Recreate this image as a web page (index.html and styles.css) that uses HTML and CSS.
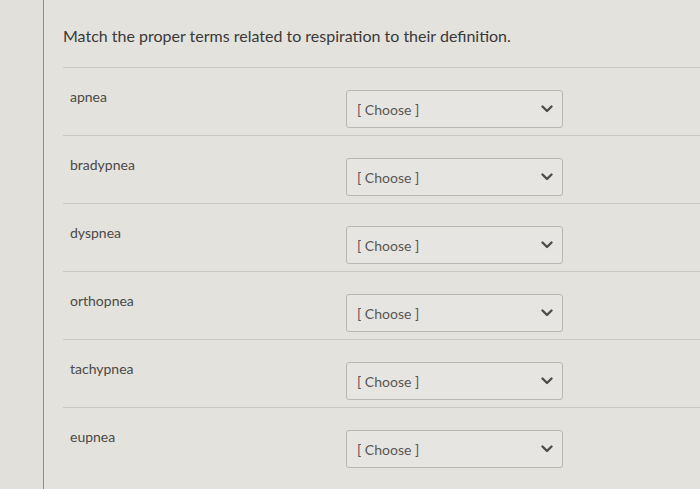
FILE: index.html
```html
<!DOCTYPE html>
<html>
<head>
<meta charset="utf-8">
<link rel="stylesheet" href="styles.css">
</head>
<body>
<div class="page">
  <div class="gutter"></div>
  <div class="content">
    <h1 class="title">Match the proper terms related to respiration to their definition.</h1>
    <div class="rows">
      <div class="row"><div class="term">apnea</div><div class="select"><span>[ Choose ]</span><svg class="chev" viewBox="0 0 12 8"><path d="M1.5 1.5 L6 6 L10.5 1.5" /></svg></div></div>
      <div class="row"><div class="term">bradypnea</div><div class="select"><span>[ Choose ]</span><svg class="chev" viewBox="0 0 12 8"><path d="M1.5 1.5 L6 6 L10.5 1.5" /></svg></div></div>
      <div class="row"><div class="term">dyspnea</div><div class="select"><span>[ Choose ]</span><svg class="chev" viewBox="0 0 12 8"><path d="M1.5 1.5 L6 6 L10.5 1.5" /></svg></div></div>
      <div class="row"><div class="term">orthopnea</div><div class="select"><span>[ Choose ]</span><svg class="chev" viewBox="0 0 12 8"><path d="M1.5 1.5 L6 6 L10.5 1.5" /></svg></div></div>
      <div class="row"><div class="term">tachypnea</div><div class="select"><span>[ Choose ]</span><svg class="chev" viewBox="0 0 12 8"><path d="M1.5 1.5 L6 6 L10.5 1.5" /></svg></div></div>
      <div class="row last"><div class="term">eupnea</div><div class="select"><span>[ Choose ]</span><svg class="chev" viewBox="0 0 12 8"><path d="M1.5 1.5 L6 6 L10.5 1.5" /></svg></div></div>
    </div>
  </div>
</div>
</body>
</html>
```
FILE: styles.css
```css
html, body {
  margin: 0;
  padding: 0;
  height: 100%;
  background: #e4e2dd;
  font-family: Lato, "Open Sans", sans-serif;
  overflow: hidden;
}
.page {
  display: flex;
  height: 100%;
}
.gutter {
  width: 43px;
  flex: none;
  border-right: 1px solid #8f8d89;
  background: #e2e0db;
}
.content {
  flex: 1;
  padding-left: 19px;
}
.title {
  margin: 0;
  padding-top: 26px;
  height: 67px;
  box-sizing: border-box;
  font-size: 16px;
  font-weight: 400;
  line-height: 20px;
  color: #3a3938;
}
.row {
  display: flex;
  align-items: flex-start;
  height: 68px;
  box-sizing: border-box;
  border-top: 1px solid #c9c7c2;
  padding: 20px 0 0 7px;
}
.term {
  width: 276px;
  font-size: 14px;
  line-height: 18px;
  color: #4a4947;
}
.select {
  margin-top: 2px;
  width: 217px;
  height: 38px;
  box-sizing: border-box;
  border: 1px solid #b9b7b2;
  border-radius: 3px;
  background: #e7e5e1;
  display: flex;
  align-items: center;
  justify-content: space-between;
  padding: 0 9px 0 10px;
  font-size: 14px;
  color: #585754;
}
.chev {
  width: 12px;
  height: 8px;
  fill: none;
  stroke: #4f4e4c;
  stroke-width: 2.4;
  stroke-linecap: round;
  stroke-linejoin: round;
}
```
